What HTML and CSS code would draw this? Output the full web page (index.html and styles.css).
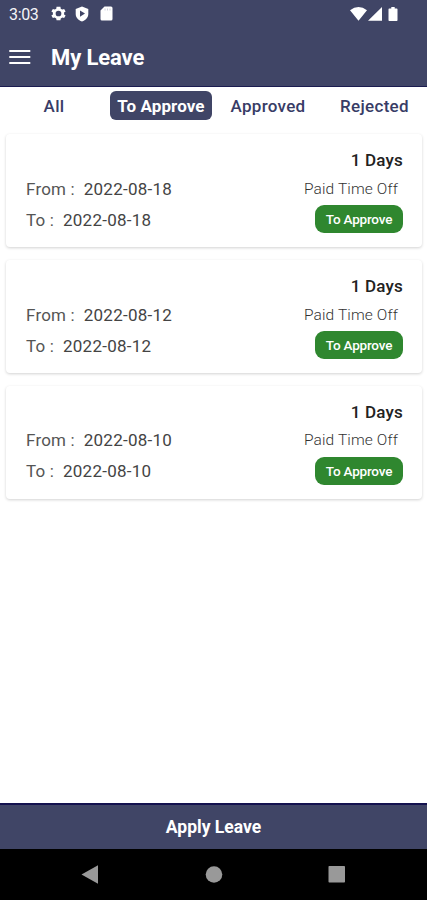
FILE: index.html
```html
<!DOCTYPE html>
<html lang="en">
<head>
<meta charset="utf-8">
<title>My Leave</title>
<link rel="stylesheet" href="styles.css">
</head>
<body>
<div class="status">
  <span class="clock">3:03</span>
  <svg class="gear" width="15" height="15" viewBox="2 2 20 20"><path fill="#fff" fill-rule="evenodd" d="M19.400 13.300a7.500 7.500 0 0 0 0-2.600l2.100-1.300-2-3.500-2.300.9a8 8 0 0 0-2.200-1.300L14.600 3H9.400L9 5.500a8 8 0 0 0-2.200 1.300l-2.300-.9-2 3.500 2.100 1.300a7.500 7.500 0 0 0 0 2.600l-2.100 1.300 2 3.500 2.300-.9A8 8 0 0 0 9 18.500l.4 2.500h5.200l.4-2.500a8 8 0 0 0 2.200-1.300l2.300.9 2-3.500zM12 8.200a3.800 3.800 0 1 1 0 7.600 3.800 3.800 0 0 1 0-7.600z"/></svg>
  <svg class="shield" width="14" height="16" viewBox="0 0 14 16"><path fill="#fff" fill-rule="evenodd" d="M7 .5 13.300 3v5c0 3.500-2.500 6.300-6.300 7.500C3.200 14.300.7 11.500.7 8V3zM5 4.500v6.200L10 7.600z"/></svg>
  <svg class="sd" width="13" height="15" viewBox="0 0 13 15"><path fill="#fff" d="M4.500.5H11a1.500 1.500 0 0 1 1.500 1.500v11a1.500 1.500 0 0 1-1.500 1.500H2A1.500 1.500 0 0 1 .5 13V4.500z"/><path stroke="#d0d2dc" stroke-width="1" d="M5 2.500v2M7.500 2.500v2M10 2.500v2"/></svg>
  <svg class="signals" width="50" height="16" viewBox="0 0 50 16"><path fill="#fff" d="M0 4.200Q8.500-2.200 17 4.200L8.500 14.800zM18 14.800 32 1v13.800zM39.300 2.500h2V1h3.400v1.500h2q.8 0 .8.800v11q0 .8-.8.800h-7.400q-.8 0-.8-.8v-11q0-.8.800-.8z"/></svg>
</div>
<header class="header">
  <svg width="22" height="16" viewBox="0 0 22 16"><path fill="none" stroke="#fff" stroke-width="2" d="M.3 2h21M.3 8h21M.3 14h21"/></svg>
  <h1>My Leave</h1>
</header>
<nav class="tabs">
  <span class="tab">All</span>
  <span class="tab active">To Approve</span>
  <span class="tab">Approved</span>
  <span class="tab">Rejected</span>
</nav>
<main class="list">
  <article class="card">
    <div class="dates"><p>From :&nbsp; <b>2022-08-18</b></p><p>To :&nbsp; <b>2022-08-18</b></p></div>
    <div class="info"><strong>1 Days</strong><span class="type">Paid Time Off</span><span class="badge">To Approve</span></div>
  </article>
  <article class="card">
    <div class="dates"><p>From :&nbsp; <b>2022-08-12</b></p><p>To :&nbsp; <b>2022-08-12</b></p></div>
    <div class="info"><strong>1 Days</strong><span class="type">Paid Time Off</span><span class="badge">To Approve</span></div>
  </article>
  <article class="card">
    <div class="dates"><p>From :&nbsp; <b>2022-08-10</b></p><p>To :&nbsp; <b>2022-08-10</b></p></div>
    <div class="info"><strong>1 Days</strong><span class="type">Paid Time Off</span><span class="badge">To Approve</span></div>
  </article>
</main>
<footer class="apply">Apply Leave</footer>
<div class="sysnav">
  <svg width="427" height="51" viewBox="0 0 427 51"><g fill="#999"><path d="M81.500 25.500 98 16.300v18.400z"/><circle cx="214" cy="25.500" r="8.300"/><rect x="328.500" y="17" width="16.500" height="16.500" rx=".8"/></g></svg>
</div>
</body>
</html>
```
FILE: styles.css
```css
* { box-sizing: border-box; }
body {
  margin: 0;
  height: 900px;
  display: flex;
  flex-direction: column;
  overflow: hidden;
  background: #fff;
  font-family: Roboto, sans-serif;
  color: #333;
}
.status {
  height: 28px;
  flex: none;
  display: flex;
  align-items: center;
  padding: 0 27px 0 9px;
  background: #404566;
  color: #f4f4f8;
}
.clock { width: 42px; font-size: 16px; line-height: 28px; padding-top: 1px; letter-spacing: -0.35px; }
.gear { margin-top: -1px; }
.shield { margin: -1px 0 0 9px; }
.sd { margin: -1px 0 0 11px; }
.signals { margin: -1px 0 0 auto; }
.header {
  height: 59px;
  flex: none;
  display: flex;
  align-items: center;
  gap: 20px;
  padding: 0 9px;
  background: #404566;
  border-bottom: 1px solid #1b1c50;
}
.header h1 { margin: 0; padding-top: 2px; font-size: 22px; line-height: 26px; font-weight: 700; letter-spacing: -0.1px; color: #fff; }
.tabs {
  height: 47px;
  flex: none;
  display: grid;
  grid-template-columns: 110px 102px 112px 103px;
  align-items: start;
  padding-top: 4px;
}
.tab {
  height: 29px;
  line-height: 30px;
  text-align: center;
  font-size: 17px;
  font-weight: 500;
  letter-spacing: 0.3px;
  color: #383c66;
  white-space: nowrap;
}
.tab:first-child, .tab:last-child { padding-right: 2px; }
.active { background: #404566; border-radius: 6px; color: #fff; font-weight: 700; letter-spacing: 0.1px; }
.list { flex: 1; display: flex; flex-direction: column; gap: 13px; padding: 0 5px 0 6px; }
.card {
  height: 112.850px;
  flex: none;
  display: flex;
  justify-content: space-between;
  padding: 14.900px 19px 0 20px;
  border-radius: 4px;
  background: #fff;
  box-shadow: 0 1px 3px rgba(0, 0, 0, .18);
}
.dates { padding-top: 24.800px; }
.dates p { margin: 0; font-size: 17px; line-height: 31px; letter-spacing: 0.2px; color: #555; white-space: nowrap; }
.dates b { font-weight: 400; letter-spacing: 0.25px; color: #444; }
.info { display: flex; flex-direction: column; align-items: flex-end; }
.info strong { font-size: 17px; line-height: 23px; font-weight: 500; letter-spacing: 0.2px; color: #222; }
.type { margin: 4.800px 5px 0 0; font-size: 15.500px; line-height: 24px; font-weight: 300; letter-spacing: 0.13px; color: #333; }
.badge {
  width: 88px;
  height: 28px;
  margin-top: 4.200px;
  border-radius: 9px;
  background: #2f872f;
  color: #fff;
  font-size: 13.500px;
  line-height: 28px;
  font-weight: 500;
  letter-spacing: -0.2px;
  text-align: center;
}
.apply {
  height: 46px;
  flex: none;
  background: #404566;
  border-top: 2px solid #14124f;
  color: #fff;
  font-size: 17.500px;
  font-weight: 700;
  line-height: 45px;
  text-align: center;
}
.sysnav { height: 51px; flex: none; background: #000; }
.sysnav svg { display: block; }
```
